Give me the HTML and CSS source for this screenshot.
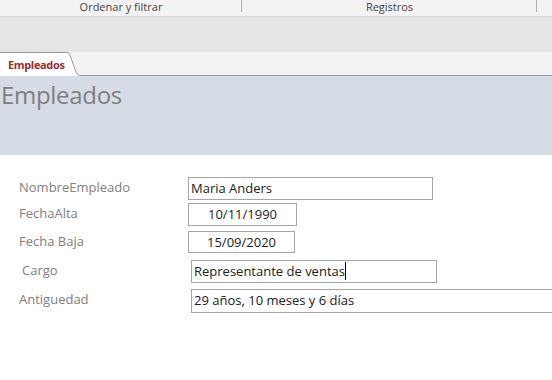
FILE: index.html
```html
<!DOCTYPE html>
<html lang="es">
<head>
<meta charset="utf-8">
<title>Empleados</title>
<link rel="stylesheet" href="styles.css">
</head>
<body>
<div class="ribbon-groups">
  <div class="group g1">Ordenar y filtrar</div>
  <div class="group g2">Registros</div>
  <div class="group g3"></div>
</div>
<div class="ribbon-space"></div>
<div class="tabstrip">
  <div class="tab">
    <span class="tab-label">Empleados</span>
    <svg class="tab-edge" width="14" height="24" viewBox="0 0 14 24">
      <path d="M0 0.5 H2 Q4 0.5 5 3 L11 20 Q12.5 23 14 23 V24 H0 Z" fill="#ffffff"/>
      <path d="M0 0.5 H2 Q4 0.5 5 3 L11 20 Q12.5 23 14 23" fill="none" stroke="#9a9a9a" stroke-width="1"/>
    </svg>
  </div>
  <div class="tab-rest"></div>
</div>
<div class="form-header">
  <h1 class="form-title">Empleados</h1>
</div>
<div class="form-body">
  <div class="row r1">
    <span class="label">NombreEmpleado</span>
    <span class="field f1">Maria Anders</span>
  </div>
  <div class="row r2">
    <span class="label">FechaAlta</span>
    <span class="field f2 center">10/11/1990</span>
  </div>
  <div class="row r3">
    <span class="label">Fecha Baja</span>
    <span class="field f3 center">15/09/2020</span>
  </div>
  <div class="row r4">
    <span class="label l4">Cargo</span>
    <span class="field f4">Representante de ventas<span class="caret"></span></span>
  </div>
  <div class="row r5">
    <span class="label">Antiguedad</span>
    <span class="field f5">29 años, 10 meses y 6 días</span>
  </div>
</div>
</body>
</html>
```

FILE: styles.css
```css
html, body {
  margin: 0;
  padding: 0;
  background: #ffffff;
  overflow: hidden;
}
body {
  width: 552px;
  height: 380px;
  font-family: "Open Sans", "Noto Sans", sans-serif;
}

.ribbon-groups {
  display: flex;
  height: 16px;
  background: #f3f3f3;
  border-bottom: 1px solid #d4d4d4;
}
.group {
  position: relative;
  font-size: 11px;
  line-height: 14px;
  color: #444444;
  text-align: center;
}
.group::after {
  content: "";
  position: absolute;
  right: 0;
  top: 0;
  height: 12px;
  border-right: 1px solid #b2b2b2;
}
.g1 { width: 242px; }
.g2 { width: 295px; }
.g3 { flex: 1; }
.g3::after { display: none; }

.ribbon-space {
  height: 35px;
  background: #e6e6e6;
}

.tabstrip {
  display: flex;
  height: 24px;
  background: #f3f3f3;
}
.tab {
  display: flex;
  align-items: stretch;
}
.tab-label {
  background: #ffffff;
  border-top: 1px solid #9a9a9a;
  width: 65px;
  padding-left: 8px;
  box-sizing: border-box;
  font-size: 11px;
  font-weight: bold;
  color: #a4262c;
  line-height: 22px;
  padding-top: 1px;
  letter-spacing: -0.35px;
}
.tab-edge {
  display: block;
}
.tab-rest {
  flex: 1;
  border-bottom: 1px solid #9a9a9a;
}

.form-header {
  height: 79px;
  background: #d6dce5;
}
.form-title {
  margin: 0;
  padding: 3px 0 0 1px;
  font-size: 24px;
  font-weight: normal;
  line-height: 32px;
  color: #7f7f7f;
  letter-spacing: -0.3px;
}

.form-body {
  padding-top: 22px;
}
.row {
  display: flex;
  align-items: flex-start;
}
.label {
  width: 188px;
  padding-left: 19px;
  box-sizing: border-box;
  font-size: 13px;
  color: #808080;
  line-height: 18px;
  padding-top: 1px;
  flex: none;
}
.field {
  position: relative;
  display: block;
  box-sizing: border-box;
  border: 1px solid #a6a6a6;
  font-size: 13px;
  color: #222222;
  line-height: 19px;
  padding: 1px 0 0 2px;
  white-space: nowrap;
  flex: none;
}
.center { text-align: center; padding-left: 0; }
.f1 { width: 245px; height: 23px; }
.f2 { width: 109px; height: 23px; }
.f3 { width: 107px; height: 22px; }
.f4 { width: 246px; height: 23px; }
.f5 { flex: 1; height: 24px; border-right: none; }
.r2 { margin-top: 3px; }
.r3 { margin-top: 5px; }
.r4 { margin-top: 7px; }
.r4 .label { width: 191px; padding-left: 22px; }
.r5 { margin-top: 6px; }
.r5 .label { width: 191px; }
.caret {
  display: inline-block;
  width: 1px;
  height: 18px;
  background: #000000;
  vertical-align: -4px;
}
```
